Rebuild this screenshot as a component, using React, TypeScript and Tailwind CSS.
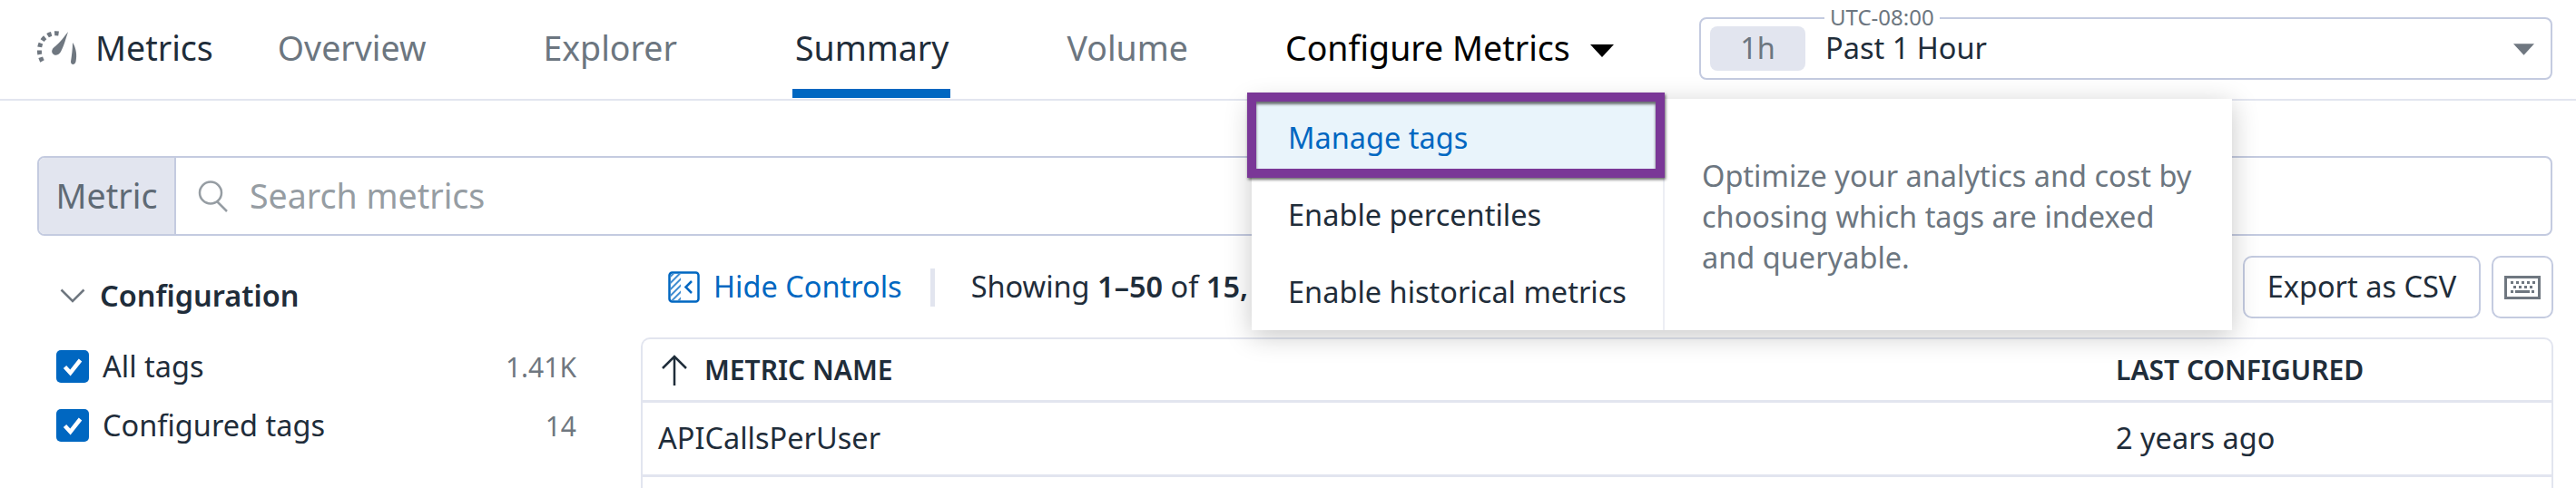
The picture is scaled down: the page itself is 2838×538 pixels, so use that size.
import { Fragment } from "react";

const tabs = [
  { label: "Overview", className: "ml-[71px] text-[#6c7680]" },
  { label: "Explorer", className: "ml-[129px] text-[#6c7680]" },
  { label: "Summary", className: "ml-[130px] text-[#1f2d3a]", active: true },
  { label: "Volume", className: "ml-[130px] text-[#6c7680]" },
];

const filters = [
  { label: "All tags", count: "1.41K" },
  { label: "Configured tags", count: "14" },
];

function GaugeIcon() {
  return (
    <svg width="46" height="38" viewBox="0 0 46 38" className="shrink-0" fill="none">
      <path
        d="M6.5 33.5C1.5 24 2.5 13 10 7C14 3.5 19 2 25 3"
        stroke="#6f7780"
        strokeWidth="5"
        strokeDasharray="4.5 3.5"
      />
      <path d="M35 1C33 7 30 18 27 23C25 27 20 28 18 25C16 22 18 19 21 17C26 13 31 6 35 1Z" fill="#6f7780" />
      <path d="M40 13C44 19 45 27 43.5 34C42.5 38 38 38 38 34C39 27 40 20 40 13Z" fill="#6f7780" />
    </svg>
  );
}

function SearchIcon() {
  return (
    <svg width="36" height="36" viewBox="0 0 36 36" fill="none" stroke="#969da3" strokeWidth="2.5">
      <circle cx="15" cy="14.5" r="12" />
      <path d="M22 24L33 35" />
    </svg>
  );
}

function HideControlsIcon() {
  return (
    <svg width="35" height="35" viewBox="0 0 35 35" fill="none" className="shrink-0">
      <defs>
        <pattern id="hatch" width="5" height="5" patternUnits="userSpaceOnUse" patternTransform="rotate(45)">
          <rect width="2" height="5" fill="#0067c1" opacity="0.75" />
        </pattern>
      </defs>
      <rect x="3" y="3" width="11" height="29" fill="url(#hatch)" />
      <rect x="1.5" y="1.5" width="32" height="32" rx="3" stroke="#0067c1" strokeWidth="2.5" />
      <path d="M26 11L19.5 17.5L26 24" stroke="#0067c1" strokeWidth="2.5" />
    </svg>
  );
}

function KeyboardIcon() {
  const rows = [
    [5, 11, 17, 23, 29],
    [8, 14, 20, 26],
  ];
  return (
    <svg width="40" height="26" viewBox="0 0 40 26" fill="none">
      <rect x="1.5" y="1.5" width="37" height="23" stroke="#6f7780" strokeWidth="3" />
      {rows.map((xs, i) => (
        <Fragment key={i}>
          {xs.map((x) => (
            <rect key={x} x={x + 2} y={6 + i * 5} width="3" height="3" fill="#6f7780" />
          ))}
        </Fragment>
      ))}
      <rect x="7" y="16" width="3" height="3" fill="#6f7780" />
      <rect x="12" y="16" width="16" height="3" fill="#6f7780" />
      <rect x="30" y="16" width="3" height="3" fill="#6f7780" />
    </svg>
  );
}

function Caret({ className }: { className: string }) {
  return (
    <svg viewBox="0 0 26 14" className={className}>
      <path d="M0 0H26L13 14Z" fill="currentColor" />
    </svg>
  );
}

function CheckBox() {
  return (
    <span className="flex h-[36px] w-[36px] shrink-0 items-center justify-center rounded-[5px] bg-[#0067c1]">
      <svg width="24" height="22" viewBox="0 0 24 22" fill="none">
        <path d="M3.5 11.5L9.5 18L20.5 4" stroke="white" strokeWidth="4.5" />
      </svg>
    </span>
  );
}

export default function App() {
  return (
    <div className="relative h-[538px] w-[2838px] overflow-hidden bg-white font-['Noto_Sans',sans-serif] text-[#1f2d3a] antialiased">
      <header className="flex h-[111px] items-start border-b-2 border-[#e2e5ef]">
        <div className="flex h-[109px] items-center pl-[40px] pb-[3px] text-[37.5px]">
          <GaugeIcon />
          <span className="ml-[19px]">Metrics</span>
          {tabs.map((t) => (
            <a key={t.label} className={`relative flex h-[109px] items-center ${t.className}`}>
              {t.label}
              {t.active && <span className="absolute bottom-0 left-[-3px] right-[-2px] h-[10px] bg-[#0067c1]" />}
            </a>
          ))}
          <span className="ml-[107px] text-black">Configure Metrics</span>
          <Caret className="ml-[22px] mt-[6px] h-[14px] w-[26px] text-black" />
        </div>
        <div className="relative ml-auto mr-[26px] mt-[19px] flex h-[69px] w-[940px] items-center rounded-[8px] border-2 border-[#c4cbe0] pl-[10px] pr-[18px]">
          <span className="absolute left-[136px] top-[-15px] bg-white px-[6px] text-[24px] leading-[26px] text-[#6c7680]">
            UTC-08:00
          </span>
          <span className="flex h-[49px] w-[105px] items-center justify-center rounded-[8px] bg-[#e2e5ef] text-[32.5px] text-[#6c7680]">
            1h
          </span>
          <span className="ml-[22px] text-[32.5px]">Past 1 Hour</span>
          <Caret className="ml-auto mt-[2px] h-[13px] w-[23px] text-[#6f7780]" />
        </div>
      </header>

      <div className="ml-[41px] mt-[61px] flex h-[88px] w-[2771px] items-center rounded-[8px] border-2 border-[#c4cbe0]">
        <span className="flex h-full w-[151px] items-center justify-center rounded-l-[6px] border-r-2 border-[#c4cbe0] bg-[#e2e5ef] text-[37.5px] text-[#5f6a75]">
          Metric
        </span>
        <span className="ml-[23px]">
          <SearchIcon />
        </span>
        <span className="ml-[22px] text-[37.5px] text-[#969da3]">Search metrics</span>
      </div>

      <div className="flex">
        <aside className="ml-[62px] w-[573px] shrink-0">
          <div className="mt-[40px] flex h-[52px] items-center">
            <svg width="28" height="16" viewBox="0 0 28 16" fill="none" className="ml-[4px]">
              <path d="M1.5 1.5L14 14L26.5 1.5" stroke="#6f7780" strokeWidth="2.5" />
            </svg>
            <span className="ml-[16px] text-[32.5px] font-semibold">Configuration</span>
          </div>
          <div className="mt-[34px] flex flex-col gap-[29px]">
            {filters.map((f) => (
              <div key={f.label} className="flex h-[36px] items-center text-[32.5px]">
                <CheckBox />
                <span className="ml-[15px]">{f.label}</span>
                <span className="ml-auto text-[30px] text-[#6f7780]">{f.count}</span>
              </div>
            ))}
          </div>
        </aside>

        <main className="ml-[71px] w-[2107px] shrink-0">
          <div className="mt-[22px] flex h-[69px] items-center text-[32.5px]">
            <span className="ml-[30px]">
              <HideControlsIcon />
            </span>
            <a className="ml-[15px] text-[#0067c1]">Hide Controls</a>
            <span className="ml-[31px] h-[42px] w-[5px] bg-[#e2e5ef]" />
            <span className="ml-[40px] whitespace-nowrap">
              Showing <b className="font-semibold">1–50</b> of <b className="font-semibold">15,</b>
            </span>
            <button className="ml-auto h-[69px] w-[262px] rounded-[10px] border-2 border-[#c4cbe0] text-[32.5px]">
              Export as CSV
            </button>
            <button className="ml-[12px] flex h-[69px] w-[68px] items-center justify-center rounded-[10px] border-2 border-[#c4cbe0]">
              <KeyboardIcon />
            </button>
          </div>

          <div className="mt-[21px] h-[300px] rounded-t-[10px] border-x-2 border-t-2 border-[#e2e5ef]">
            <div className="flex h-[70px] items-center border-b-[3px] border-[#e2e5ef] text-[30px] font-semibold">
              <svg width="30" height="34" viewBox="0 0 30 34" fill="none" className="ml-[20px]">
                <path d="M15 34V2M2 15L15 2L28 15" stroke="#1f2d3a" strokeWidth="2.5" />
              </svg>
              <span className="ml-[18px]">METRIC NAME</span>
              <span className="ml-auto w-[480px]">LAST CONFIGURED</span>
            </div>
            <div className="flex h-[82px] items-center border-b-[3px] border-[#e2e5ef] text-[32.5px]">
              <span className="ml-[17px]">APICallsPerUser</span>
              <span className="ml-auto w-[480px]">2 years ago</span>
            </div>
          </div>
        </main>
      </div>

      <div className="absolute left-[1379px] top-[109px] flex h-[255px] w-[1080px] bg-white text-[32.5px] shadow-[0_6px_28px_rgba(0,0,0,0.22)]">
        <div className="w-[455px] border-r-2 border-[#eceef4]">
          <div className="relative flex h-[86px] items-center pl-[40px]">
            <span className="absolute left-[-5px] right-[-2px] top-[-7px] bottom-[-1px] border-[10px] border-[#7a3797] bg-[#e9f4fb] shadow-[1px_2px_3px_rgba(0,0,0,0.6),inset_0_3px_3px_rgba(0,0,0,0.55)]" />
            <span className="relative text-[#0067c1]">Manage tags</span>
          </div>
          <div className="flex h-[85px] items-center pl-[40px]">Enable percentiles</div>
          <div className="flex h-[84px] items-center pl-[40px]">Enable historical metrics</div>
        </div>
        <p className="w-[625px] pl-[41px] pr-[30px] pt-[62px] text-[32.5px] leading-[45px] text-[#6c7680]">
          Optimize your analytics and cost by choosing which tags are indexed and queryable.
        </p>
      </div>
    </div>
  );
}
